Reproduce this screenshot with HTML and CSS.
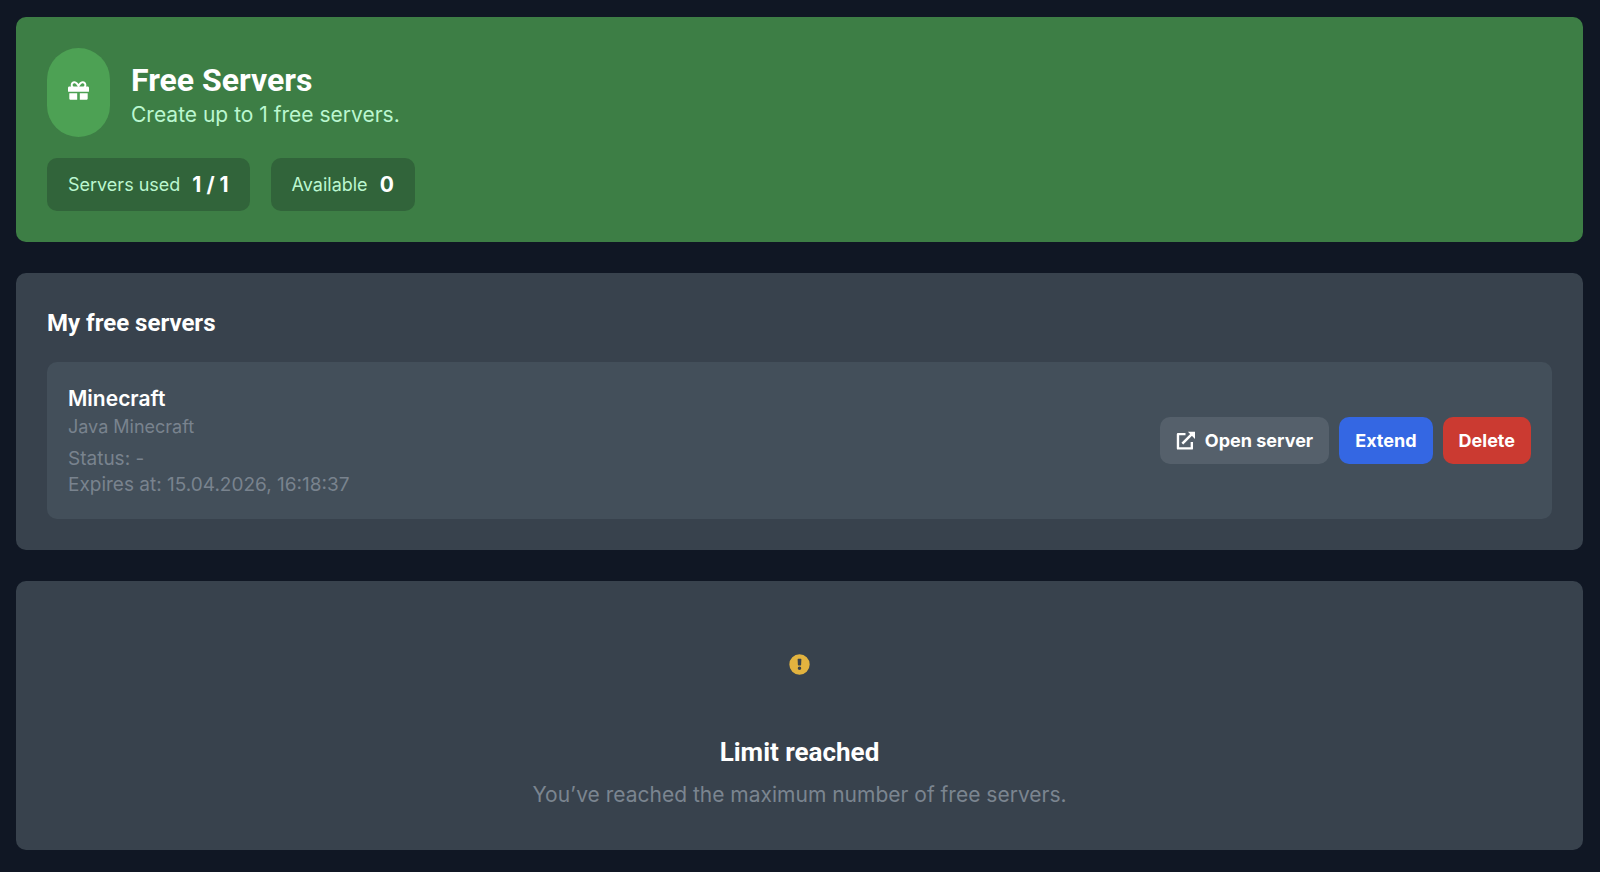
FILE: index.html
```html
<!DOCTYPE html>
<html lang="en">
  <head>
    <meta charset="UTF-8" />
    <meta name="viewport" content="width=device-width, initial-scale=1.0" />
    <title>Free Servers</title>
    <link rel="stylesheet" href="styles.css">
  </head>
  <body>
    <main class="page">
      <section class="card hero">
        <div class="hero-head">
          <div class="hero-icon">
            <svg viewBox="0 0 512 512" aria-hidden="true">
              <path d="M32 448c0 17.700 14.300 32 32 32h160V320H32v128zm256 32h160c17.700 0 32-14.300 32-32V320H288v160zm192-320h-42.100c6.200-12.100 10.100-25.500 10.100-40 0-48.500-39.500-88-88-88-41.600 0-68.500 21.300-103 68.300-34.500-47-61.400-68.300-103-68.300-48.500 0-88 39.500-88 88 0 14.500 3.800 27.900 10.100 40H32c-17.700 0-32 14.300-32 32v80c0 8.800 7.200 16 16 16h480c8.800 0 16-7.200 16-16v-80c0-17.700-14.300-32-32-32zm-326.100 0c-22.100 0-40-17.900-40-40s17.900-40 40-40c19.900 0 34.600 3.300 86.100 80h-86.100zm206.100 0h-86.100c51.400-76.500 65.700-80 86.100-80 22.100 0 40 17.900 40 40s-17.900 40-40 40z" />
            </svg>
          </div>
          <div class="hero-title">
            <h1>Free Servers</h1>
            <p class="hero-text">Create up to 1 free servers.</p>
          </div>
        </div>
        <div class="stats">
          <div class="stat">Servers used <strong>1 / 1</strong></div>
          <div class="stat">Available <strong>0</strong></div>
        </div>
      </section>

      <section class="card">
        <h2>My free servers</h2>
        <div class="server">
          <div>
            <h3>Minecraft</h3>
            <p class="server-type">Java Minecraft</p>
            <p>Status: -</p>
            <p>Expires at: 15.04.2026, 16:18:37</p>
          </div>
          <div class="actions">
            <a href="#" class="btn btn-open">
              <svg viewBox="0 0 24 24" aria-hidden="true">
                <path d="M12 4H2.500v18H20v-8" fill="none" stroke="currentColor" stroke-width="3" stroke-linejoin="round" />
                <path d="M8 16L20 4" fill="none" stroke="currentColor" stroke-width="3.200" />
                <path d="M15 1H24v9z" fill="currentColor" />
              </svg>
              Open server
            </a>
            <button type="button" class="btn btn-extend">Extend</button>
            <button type="button" class="btn btn-delete">Delete</button>
          </div>
        </div>
      </section>

      <section class="card limit">
        <svg class="limit-icon" viewBox="0 0 512 512" aria-hidden="true">
          <path fill="currentColor" fill-rule="evenodd" d="M256 8a248 248 0 1 0 0 496a248 248 0 1 0 0-496zM210 128Q209 116 221 116H291Q303 116 302 128L295 270Q294 282 282 282H230Q218 282 217 270zM256 304a43 43 0 1 1 0 86a43 43 0 1 1 0-86z" />
        </svg>
        <h2>Limit reached</h2>
        <p>You’ve reached the maximum number of free servers.</p>
      </section>
    </main>
  </body>
</html>
```

FILE: styles.css
```css
* {
  box-sizing: border-box;
}
body {
  margin: 0;
  background: #101724;
  color: #fff;
  font-family: Inter, "Liberation Sans", sans-serif;
  font-size: 19px;
  line-height: 26px;
}
h1,
h2,
h3,
p {
  margin: 0;
}
.page {
  display: flex;
  flex-direction: column;
  gap: 31px;
  padding: 17px 17px 17px 16px;
}
.card {
  padding: 31px;
  background: #38424d;
  border-radius: 10px;
}
.hero {
  background: #3d7e45;
}
.hero-head {
  display: flex;
  align-items: center;
  gap: 21px;
}
.hero-icon {
  display: flex;
  align-items: center;
  justify-content: center;
  width: 63px;
  height: 89px;
  padding-bottom: 5px;
  background: #4da154;
  border-radius: 32px;
}
.hero-icon svg {
  width: 21px;
  height: 21px;
  fill: #fff;
}
.hero-title {
  padding-top: 5px;
}
h1 {
  font-family: Roboto, "Liberation Sans", sans-serif;
  font-size: 32px;
  line-height: 38px;
}
.hero-text {
  color: #bbf7d0;
  font-size: 21px;
  line-height: 31px;
}
.stats {
  display: flex;
  gap: 21px;
  margin-top: 21px;
}
.stat {
  display: flex;
  align-items: center;
  gap: 12px;
  padding: 11px 21px 10px;
  background: #31643a;
  border-radius: 10px;
  color: #bbf7d0;
  font-size: 18px;
}
.stat strong {
  color: #fff;
  font-size: 21px;
  line-height: 32px;
}
h2 {
  font-family: Roboto, "Liberation Sans", sans-serif;
  font-size: 24px;
  line-height: 38px;
}
.server {
  display: flex;
  align-items: center;
  justify-content: space-between;
  margin-top: 20px;
  padding: 21px;
  background: #434f5a;
  border-radius: 10px;
  color: #79838e;
}
h3 {
  color: #fff;
  font-size: 21px;
  font-weight: 600;
  line-height: 31px;
}
.server-type {
  margin-bottom: 6px;
  font-size: 18px;
}
.actions {
  display: flex;
  gap: 10px;
}
.btn {
  display: flex;
  align-items: center;
  gap: 10px;
  padding: 10px 16px;
  border: none;
  border-radius: 10px;
  color: #fff;
  font-family: inherit;
  font-size: 18px;
  font-weight: 700;
  line-height: 27px;
  text-decoration: none;
  cursor: pointer;
}
.btn svg {
  width: 19px;
  height: 19px;
}
.btn-open {
  background: #55606b;
}
.btn-extend {
  background: #3467e3;
}
.btn-delete {
  background: #cb3a31;
}
.limit {
  display: flex;
  flex-direction: column;
  align-items: center;
  padding: 73px 31px 40px;
  color: #7b8590;
  font-size: 21px;
  line-height: 31px;
}
.limit-icon {
  width: 21px;
  height: 21px;
  margin-bottom: 58px;
  color: #e2b33f;
}
.limit h2 {
  margin-bottom: 8px;
  color: #fff;
  font-size: 26px;
}
```
